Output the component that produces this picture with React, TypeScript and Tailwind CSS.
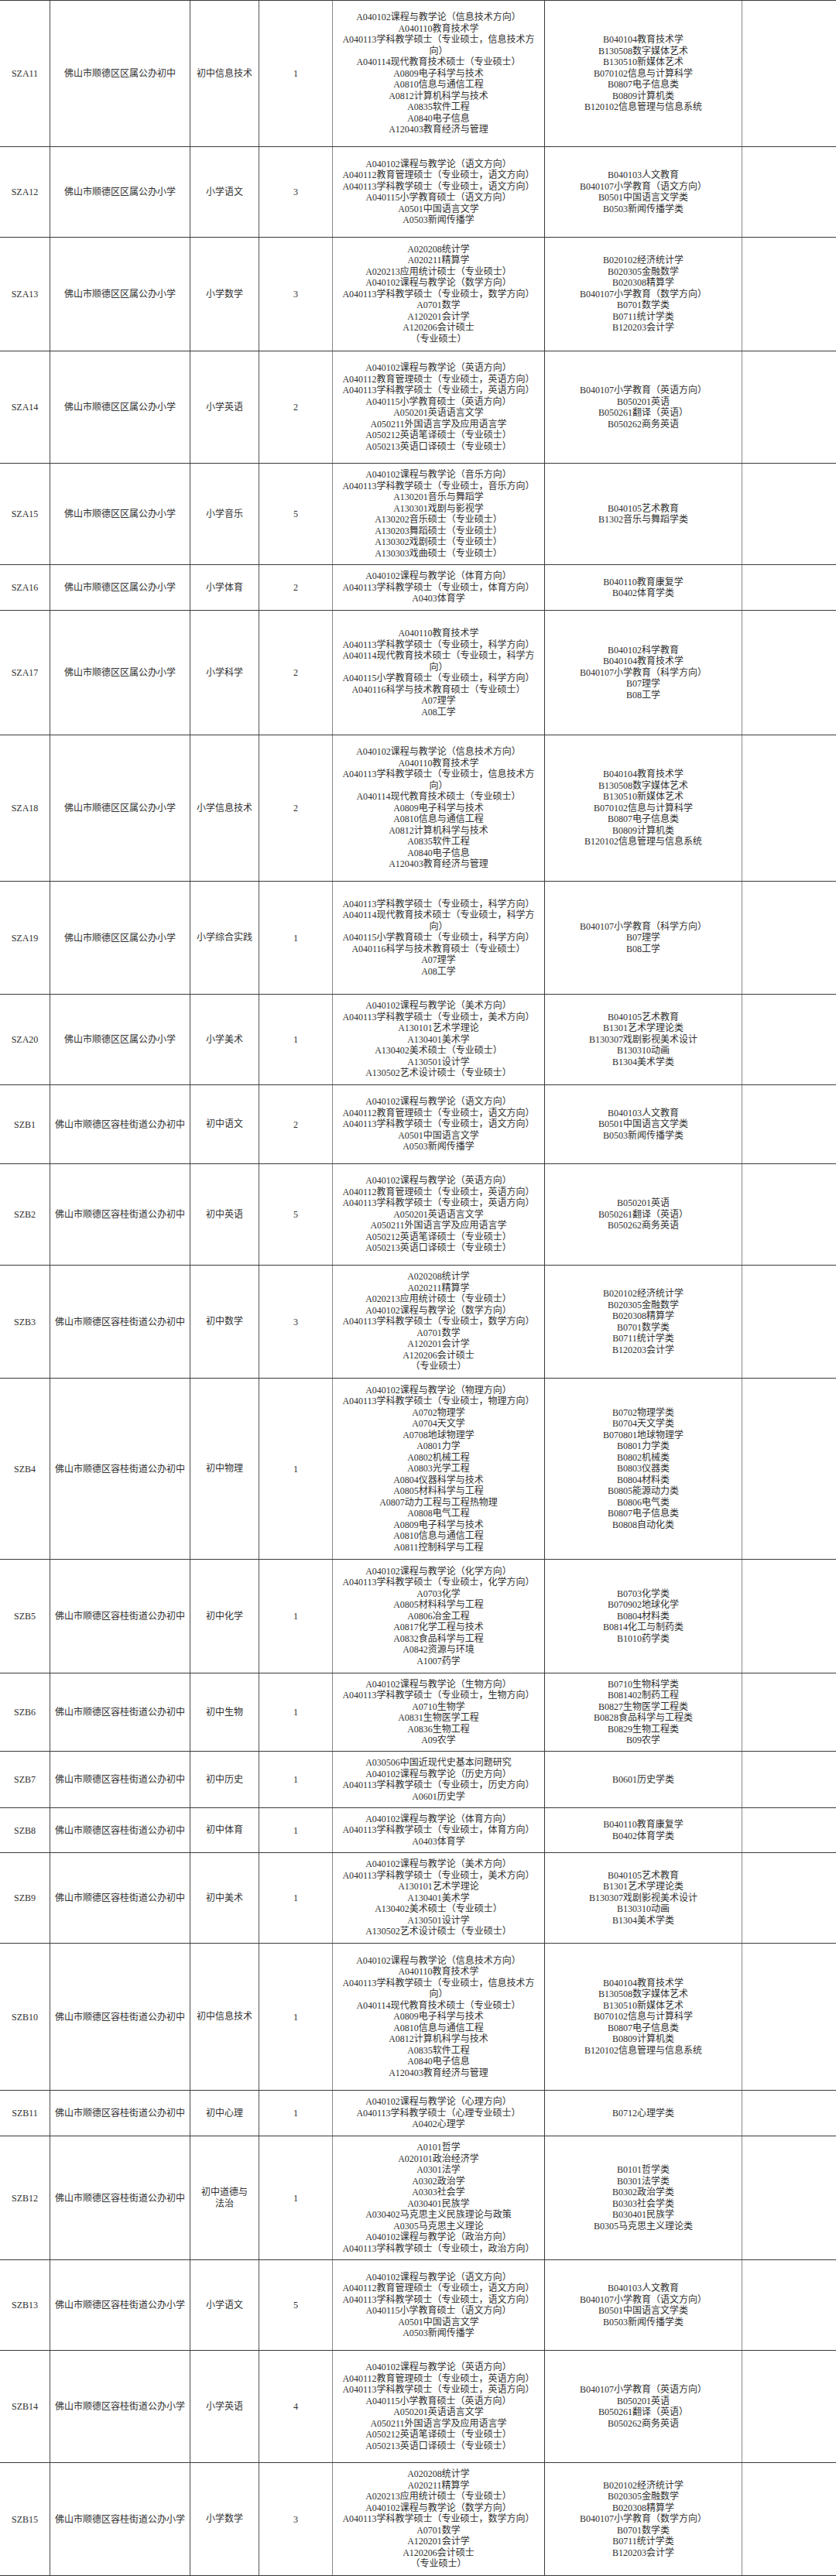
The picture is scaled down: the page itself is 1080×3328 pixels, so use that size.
import React from "react";

type Row = {
  code: string;
  unit: string;
  post: string[];
  count: number;
  a: string[];
  b: string[];
  h: string;
};

const XIAO = "佛山市顺德区区属公办小学";
const RG_CZ = "佛山市顺德区容桂街道公办初中";
const RG_XX = "佛山市顺德区容桂街道公办小学";

const XINXI_A = [
  "A040102课程与教学论（信息技术方向）",
  "A040110教育技术学",
  "A040113学科教学硕士（专业硕士，信息技术方",
  "向）",
  "A040114现代教育技术硕士（专业硕士）",
  "A0809电子科学与技术",
  "A0810信息与通信工程",
  "A0812计算机科学与技术",
  "A0835软件工程",
  "A0840电子信息",
  "A120403教育经济与管理",
];
const XINXI_B = [
  "B040104教育技术学",
  "B130508数字媒体艺术",
  "B130510新媒体艺术",
  "B070102信息与计算科学",
  "B0807电子信息类",
  "B0809计算机类",
  "B120102信息管理与信息系统",
];

const YUWEN_A = [
  "A040102课程与教学论（语文方向）",
  "A040112教育管理硕士（专业硕士，语文方向）",
  "A040113学科教学硕士（专业硕士，语文方向）",
  "A040115小学教育硕士（语文方向）",
  "A0501中国语言文学",
  "A0503新闻传播学",
];
const YUWEN_B = [
  "B040103人文教育",
  "B040107小学教育（语文方向）",
  "B0501中国语言文学类",
  "B0503新闻传播学类",
];

const SHUXUE_A = [
  "A020208统计学",
  "A020211精算学",
  "A020213应用统计硕士（专业硕士）",
  "A040102课程与教学论（数学方向）",
  "A040113学科教学硕士（专业硕士，数学方向）",
  "A0701数学",
  "A120201会计学",
  "A120206会计硕士",
  "（专业硕士）",
];
const SHUXUE_B = [
  "B020102经济统计学",
  "B020305金融数学",
  "B020308精算学",
  "B040107小学教育（数学方向）",
  "B0701数学类",
  "B0711统计学类",
  "B120203会计学",
];

const YINGYU_A = [
  "A040102课程与教学论（英语方向）",
  "A040112教育管理硕士（专业硕士，英语方向）",
  "A040113学科教学硕士（专业硕士，英语方向）",
  "A040115小学教育硕士（英语方向）",
  "A050201英语语言文学",
  "A050211外国语言学及应用语言学",
  "A050212英语笔译硕士（专业硕士）",
  "A050213英语口译硕士（专业硕士）",
];
const YINGYU_B = [
  "B040107小学教育（英语方向）",
  "B050201英语",
  "B050261翻译（英语）",
  "B050262商务英语",
];

const TIYU_A = [
  "A040102课程与教学论（体育方向）",
  "A040113学科教学硕士（专业硕士，体育方向）",
  "A0403体育学",
];
const TIYU_B = ["B040110教育康复学", "B0402体育学类"];

const MEISHU_A = [
  "A040102课程与教学论（美术方向）",
  "A040113学科教学硕士（专业硕士，美术方向）",
  "A130101艺术学理论",
  "A130401美术学",
  "A130402美术硕士（专业硕士）",
  "A130501设计学",
  "A130502艺术设计硕士（专业硕士）",
];
const MEISHU_B = [
  "B040105艺术教育",
  "B1301艺术学理论类",
  "B130307戏剧影视美术设计",
  "B130310动画",
  "B1304美术学类",
];

const rows: Row[] = [
  { code: "SZA11", unit: "佛山市顺德区区属公办初中", post: ["初中信息技术"], count: 1, a: XINXI_A, b: XINXI_B, h: "h-[189px]" },
  { code: "SZA12", unit: XIAO, post: ["小学语文"], count: 3, a: YUWEN_A, b: YUWEN_B, h: "h-[117px]" },
  { code: "SZA13", unit: XIAO, post: ["小学数学"], count: 3, a: SHUXUE_A, b: SHUXUE_B, h: "h-[147px]" },
  { code: "SZA14", unit: XIAO, post: ["小学英语"], count: 2, a: YINGYU_A, b: YINGYU_B, h: "h-[145px]" },
  {
    code: "SZA15",
    unit: XIAO,
    post: ["小学音乐"],
    count: 5,
    a: [
      "A040102课程与教学论（音乐方向）",
      "A040113学科教学硕士（专业硕士，音乐方向）",
      "A130201音乐与舞蹈学",
      "A130301戏剧与影视学",
      "A130202音乐硕士（专业硕士）",
      "A130203舞蹈硕士（专业硕士）",
      "A130302戏剧硕士（专业硕士）",
      "A130303戏曲硕士（专业硕士）",
    ],
    b: ["B040105艺术教育", "B1302音乐与舞蹈学类"],
    h: "h-[131px]",
  },
  { code: "SZA16", unit: XIAO, post: ["小学体育"], count: 2, a: TIYU_A, b: TIYU_B, h: "h-[59px]" },
  {
    code: "SZA17",
    unit: XIAO,
    post: ["小学科学"],
    count: 2,
    a: [
      "A040110教育技术学",
      "A040113学科教学硕士（专业硕士，科学方向）",
      "A040114现代教育技术硕士（专业硕士，科学方",
      "向）",
      "A040115小学教育硕士（专业硕士，科学方向）",
      "A040116科学与技术教育硕士（专业硕士）",
      "A07理学",
      "A08工学",
    ],
    b: ["B040102科学教育", "B040104教育技术学", "B040107小学教育（科学方向）", "B07理学", "B08工学"],
    h: "h-[161px]",
  },
  { code: "SZA18", unit: XIAO, post: ["小学信息技术"], count: 2, a: XINXI_A, b: XINXI_B, h: "h-[189px]" },
  {
    code: "SZA19",
    unit: XIAO,
    post: ["小学综合实践"],
    count: 1,
    a: [
      "A040113学科教学硕士（专业硕士，科学方向）",
      "A040114现代教育技术硕士（专业硕士，科学方",
      "向）",
      "A040115小学教育硕士（专业硕士，科学方向）",
      "A040116科学与技术教育硕士（专业硕士）",
      "A07理学",
      "A08工学",
    ],
    b: ["B040107小学教育（科学方向）", "B07理学", "B08工学"],
    h: "h-[146px]",
  },
  { code: "SZA20", unit: XIAO, post: ["小学美术"], count: 1, a: MEISHU_A, b: MEISHU_B, h: "h-[117px]" },
  {
    code: "SZB1",
    unit: RG_CZ,
    post: ["初中语文"],
    count: 2,
    a: [
      "A040102课程与教学论（语文方向）",
      "A040112教育管理硕士（专业硕士，语文方向）",
      "A040113学科教学硕士（专业硕士，语文方向）",
      "A0501中国语言文学",
      "A0503新闻传播学",
    ],
    b: ["B040103人文教育", "B0501中国语言文学类", "B0503新闻传播学类"],
    h: "h-[102px]",
  },
  {
    code: "SZB2",
    unit: RG_CZ,
    post: ["初中英语"],
    count: 5,
    a: [
      "A040102课程与教学论（英语方向）",
      "A040112教育管理硕士（专业硕士，英语方向）",
      "A040113学科教学硕士（专业硕士，英语方向）",
      "A050201英语语言文学",
      "A050211外国语言学及应用语言学",
      "A050212英语笔译硕士（专业硕士）",
      "A050213英语口译硕士（专业硕士）",
    ],
    b: ["B050201英语", "B050261翻译（英语）", "B050262商务英语"],
    h: "h-[131px]",
  },
  {
    code: "SZB3",
    unit: RG_CZ,
    post: ["初中数学"],
    count: 3,
    a: SHUXUE_A,
    b: ["B020102经济统计学", "B020305金融数学", "B020308精算学", "B0701数学类", "B0711统计学类", "B120203会计学"],
    h: "h-[146px]",
  },
  {
    code: "SZB4",
    unit: RG_CZ,
    post: ["初中物理"],
    count: 1,
    a: [
      "A040102课程与教学论（物理方向）",
      "A040113学科教学硕士（专业硕士，物理方向）",
      "A0702物理学",
      "A0704天文学",
      "A0708地球物理学",
      "A0801力学",
      "A0802机械工程",
      "A0803光学工程",
      "A0804仪器科学与技术",
      "A0805材料科学与工程",
      "A0807动力工程与工程热物理",
      "A0808电气工程",
      "A0809电子科学与技术",
      "A0810信息与通信工程",
      "A0811控制科学与工程",
    ],
    b: [
      "B0702物理学类",
      "B0704天文学类",
      "B070801地球物理学",
      "B0801力学类",
      "B0802机械类",
      "B0803仪器类",
      "B0804材料类",
      "B0805能源动力类",
      "B0806电气类",
      "B0807电子信息类",
      "B0808自动化类",
    ],
    h: "h-[234px]",
  },
  {
    code: "SZB5",
    unit: RG_CZ,
    post: ["初中化学"],
    count: 1,
    a: [
      "A040102课程与教学论（化学方向）",
      "A040113学科教学硕士（专业硕士，化学方向）",
      "A0703化学",
      "A0805材料科学与工程",
      "A0806冶金工程",
      "A0817化学工程与技术",
      "A0832食品科学与工程",
      "A0842资源与环境",
      "A1007药学",
    ],
    b: ["B0703化学类", "B070902地球化学", "B0804材料类", "B0814化工与制药类", "B1010药学类"],
    h: "h-[147px]",
  },
  {
    code: "SZB6",
    unit: RG_CZ,
    post: ["初中生物"],
    count: 1,
    a: [
      "A040102课程与教学论（生物方向）",
      "A040113学科教学硕士（专业硕士，生物方向）",
      "A0710生物学",
      "A0831生物医学工程",
      "A0836生物工程",
      "A09农学",
    ],
    b: [
      "B0710生物科学类",
      "B081402制药工程",
      "B0827生物医学工程类",
      "B0828食品科学与工程类",
      "B0829生物工程类",
      "B09农学",
    ],
    h: "h-[101px]",
  },
  {
    code: "SZB7",
    unit: RG_CZ,
    post: ["初中历史"],
    count: 1,
    a: [
      "A030506中国近现代史基本问题研究",
      "A040102课程与教学论（历史方向）",
      "A040113学科教学硕士（专业硕士，历史方向）",
      "A0601历史学",
    ],
    b: ["B0601历史学类"],
    h: "h-[73px]",
  },
  { code: "SZB8", unit: RG_CZ, post: ["初中体育"], count: 1, a: TIYU_A, b: TIYU_B, h: "h-[58px]" },
  { code: "SZB9", unit: RG_CZ, post: ["初中美术"], count: 1, a: MEISHU_A, b: MEISHU_B, h: "h-[117px]" },
  { code: "SZB10", unit: RG_CZ, post: ["初中信息技术"], count: 1, a: XINXI_A, b: XINXI_B, h: "h-[190px]" },
  {
    code: "SZB11",
    unit: RG_CZ,
    post: ["初中心理"],
    count: 1,
    a: ["A040102课程与教学论（心理方向）", "A040113学科教学硕士（心理专业硕士）", "A0402心理学"],
    b: ["B0712心理学类"],
    h: "h-[59px]",
  },
  {
    code: "SZB12",
    unit: RG_CZ,
    post: ["初中道德与", "法治"],
    count: 1,
    a: [
      "A0101哲学",
      "A020101政治经济学",
      "A0301法学",
      "A0302政治学",
      "A0303社会学",
      "A030401民族学",
      "A030402马克思主义民族理论与政策",
      "A0305马克思主义理论",
      "A040102课程与教学论（政治方向）",
      "A040113学科教学硕士（专业硕士，政治方向）",
    ],
    b: ["B0101哲学类", "B0301法学类", "B0302政治学类", "B0303社会学类", "B030401民族学", "B0305马克思主义理论类"],
    h: "h-[160px]",
  },
  { code: "SZB13", unit: RG_XX, post: ["小学语文"], count: 5, a: YUWEN_A, b: YUWEN_B, h: "h-[117px]" },
  { code: "SZB14", unit: RG_XX, post: ["小学英语"], count: 4, a: YINGYU_A, b: YINGYU_B, h: "h-[145px]" },
  { code: "SZB15", unit: RG_XX, post: ["小学数学"], count: 3, a: SHUXUE_A, b: SHUXUE_B, h: "h-[146px]" },
];

function Lines({ items }: { items: string[] }) {
  return (
    <div className="flex flex-col items-center">
      {items.map((t, i) => (
        <span key={i} className="whitespace-nowrap leading-[14.5px]">
          {t}
        </span>
      ))}
    </div>
  );
}

const cell = "flex items-center justify-center text-center border-r";

export default function App() {
  return (
    <div
      className="w-[1080px] bg-white text-[12px] text-[#303030]"
      style={{ fontFamily: '"Liberation Serif", "Noto Sans CJK SC", serif' }}
    >
      <div className="border-t border-[#3a3a3a]">
        {rows.map((r) => (
          <div
            key={r.code}
            className={`grid grid-cols-[65px_181px_89px_95px_274px_255px_1fr] border-b border-[#3a3a3a] ${r.h}`}
          >
            <div className={`${cell} border-[#4a4a4a]`}>{r.code}</div>
            <div className={`${cell} border-[#4a4a4a]`}>{r.unit}</div>
            <div className={`${cell} border-[#555]`}>
              <Lines items={r.post} />
            </div>
            <div className={`${cell} border-[#8a8a8a]`}>{r.count}</div>
            <div className={`${cell} border-[#3a3a3a]`}>
              <Lines items={r.a} />
            </div>
            <div className={`${cell} border-[#8a8a8a]`}>
              <Lines items={r.b} />
            </div>
            <div />
          </div>
        ))}
      </div>
    </div>
  );
}
